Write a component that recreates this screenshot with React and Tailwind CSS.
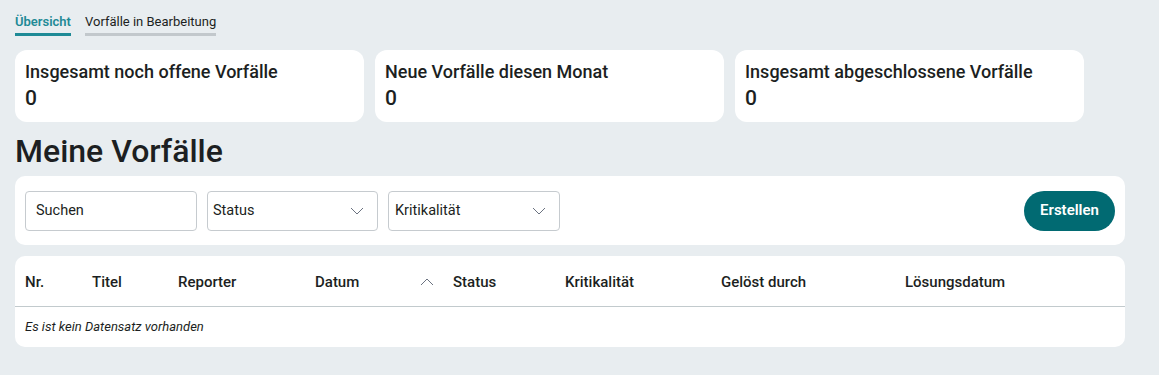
import React from "react";

const Chevron = ({ up }) => (
  <svg width="16" height="10" viewBox="0 0 16 10" fill="none" stroke="#6b7280" strokeWidth="1" className="shrink-0">
    {up ? <path d="M2 8 L8 2 L14 8" /> : <path d="M2 2 L8 8 L14 2" />}
  </svg>
);

export default function App() {
  const cols = [
    { t: "Nr.", w: "w-[67px]" },
    { t: "Titel", w: "w-[86px]" },
    { t: "Reporter", w: "w-[137px]" },
    { t: "Datum", w: "w-[138px]", sort: true },
    { t: "Status", w: "w-[112px]" },
    { t: "Kritikalität", w: "w-[156px]" },
    { t: "Gelöst durch", w: "w-[184px]" },
    { t: "Lösungsdatum", w: "flex-1" },
  ];
  return (
    <div className="min-h-[375px] w-full bg-[#e8edf0] text-[#1c1f22] font-['Roboto',sans-serif] px-[15px] pt-[11px]">
      <div className="flex gap-[14px] text-[13px]">
        <div className="h-[25px] border-b-[3px] border-[#1e8a96] text-[#1e8a96] font-semibold flex items-center">Übersicht</div>
        <div className="h-[25px] border-b-[3px] border-[#c2c8cc] flex items-center">Vorfälle in Bearbeitung</div>
      </div>
      <div className="flex gap-[11px] mt-[14px]">
        {["Insgesamt noch offene Vorfälle", "Neue Vorfälle diesen Monat", "Insgesamt abgeschlossene Vorfälle"].map((t) => (
          <div key={t} className="w-[349px] h-[72px] bg-white rounded-[12px] px-[10px] pt-[11px]">
            <div className="text-[18px] font-medium leading-[22px]">{t}</div>
            <div className="text-[21px] font-medium leading-[24px] mt-[3px]">0</div>
          </div>
        ))}
      </div>
      <h1 className="text-[32px] font-medium leading-[40px] mt-[9px] mb-[5px]">Meine Vorfälle</h1>
      <div className="w-[1110px] h-[69px] bg-white rounded-[10px] flex items-center px-[10px] gap-[10px]">
        <div className="w-[172px] h-[40px] border border-[#c6cbcf] rounded-[4px] flex items-center px-[10px] pt-[1px] text-[14.5px]">Suchen</div>
        <div className="w-[171px] h-[40px] border border-[#c6cbcf] rounded-[4px] flex items-center justify-between pl-[5px] pr-[12px] pt-[1px] text-[14.5px]">
          <span>Status</span>
          <Chevron />
        </div>
        <div className="w-[172px] h-[40px] border border-[#c6cbcf] rounded-[4px] flex items-center justify-between pl-[6px] pr-[12px] pt-[1px] text-[14.5px]">
          <span>Kritikalität</span>
          <Chevron />
        </div>
        <div className="flex-1" />
        <button className="w-[91px] h-[40px] rounded-full bg-[#016a72] text-white text-[15px] font-semibold">Erstellen</button>
      </div>
      <div className="w-[1110px] bg-white rounded-[10px] mt-[11px] px-[10px]">
        <div className="flex h-[51px] pt-[2px] items-center border-b border-[#c2cacd] -mx-[10px] px-[10px] text-[15px] font-medium">
          {cols.map((c) => (
            <div key={c.t} className={`${c.w} flex items-center`}>
              {c.sort ? (
                <div className="flex items-center justify-between w-full pr-[18px]">
                  <span>{c.t}</span>
                  <Chevron up />
                </div>
              ) : (
                c.t
              )}
            </div>
          ))}
        </div>
        <div className="h-[40px] flex items-center text-[13px] italic">Es ist kein Datensatz vorhanden</div>
      </div>
    </div>
  );
}
